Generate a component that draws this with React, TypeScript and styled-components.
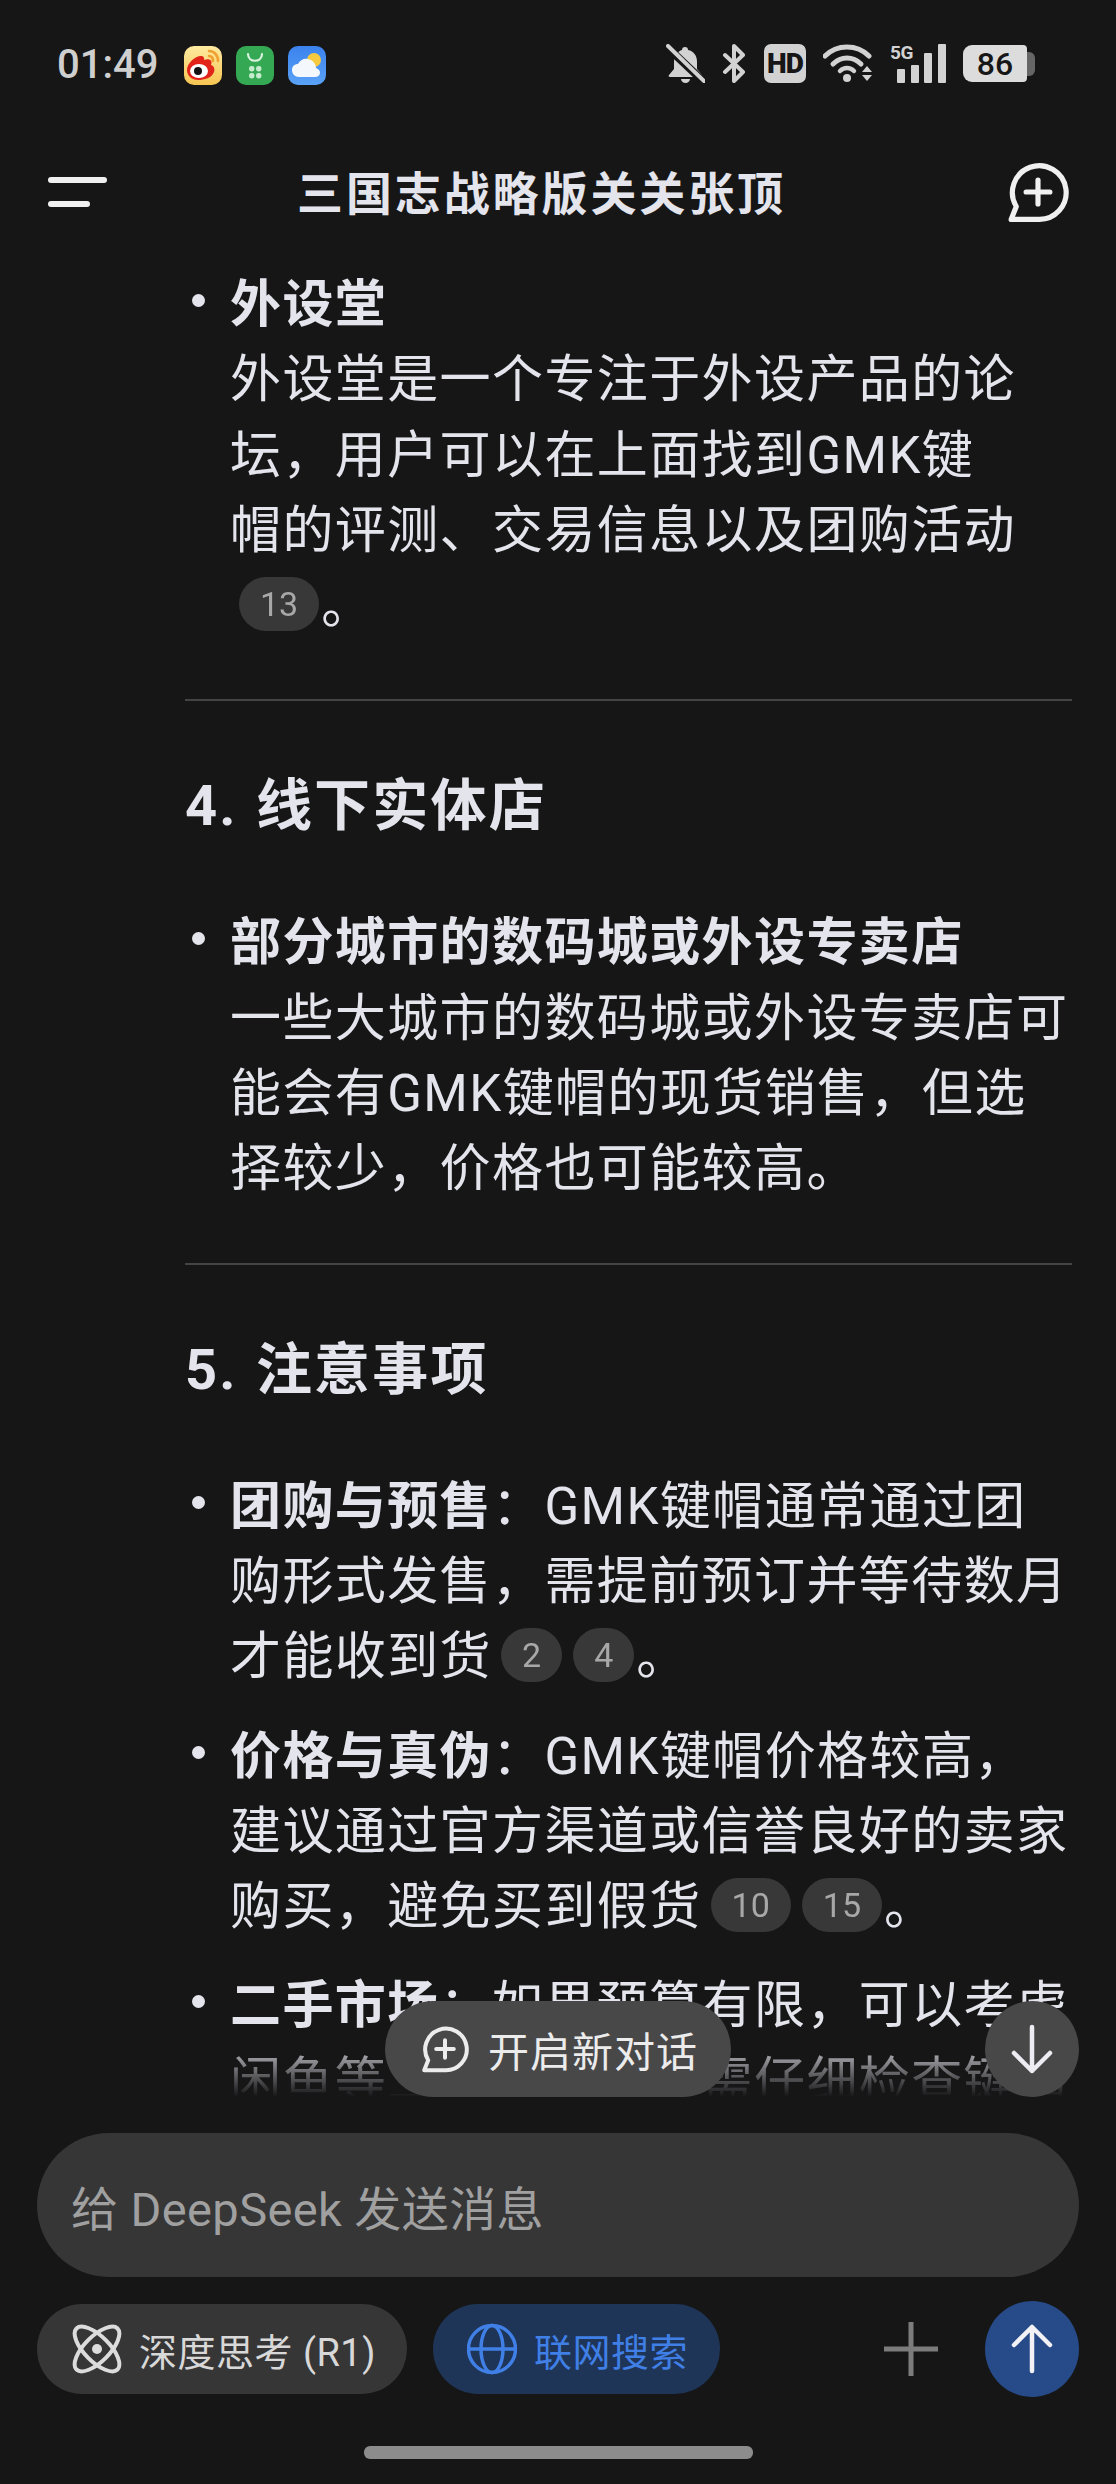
import React from 'react';
import styled, { createGlobalStyle } from 'styled-components';

const GlobalStyle = createGlobalStyle`
  html, body {
    margin: 0;
    padding: 0;
    background: #161617;
  }
  * {
    box-sizing: border-box;
  }
`;

const Phone = styled.div`
  width: 1116px;
  height: 2484px;
  display: flex;
  flex-direction: column;
  overflow: hidden;
  background: #161617;
  color: #e4e4ec;
  font-family: Roboto, "Noto Sans CJK SC", sans-serif;
`;

const StatusBar = styled.div`
  height: 130px;
  flex: none;
  display: flex;
  align-items: flex-start;
  padding: 44px 81px 0 57px;
`;

const Time = styled.div`
  font-size: 40px;
  line-height: 42px;
  font-weight: 500;
  color: #cfcfcf;
  margin-right: 26px;
`;

const AppIcons = styled.div`
  display: flex;
  gap: 14px;
  margin-top: 2px;
`;

const AppIcon = styled.svg`
  width: 38px;
  height: 39px;
  display: block;
`;

const StatusIcons = styled.div`
  margin-left: auto;
  display: flex;
  align-items: center;
  gap: 17px;
  height: 39px;
`;

const HdBadge = styled.div`
  width: 42px;
  height: 39px;
  border-radius: 7px;
  background: #d2d2d2;
  color: #161617;
  font-size: 28px;
  font-weight: 900;
  letter-spacing: -1px;
  display: flex;
  align-items: center;
  justify-content: center;
`;

const Signal = styled.div`
  position: relative;
  width: 56px;
  height: 39px;
`;

const SignalBars = styled.svg`
  display: block;
  width: 56px;
  height: 39px;
`;

const FiveG = styled.span`
  position: absolute;
  left: 0;
  top: -1px;
  font-size: 19px;
  line-height: 19px;
  font-weight: 700;
  color: #d2d2d2;
  letter-spacing: -0.5px;
`;

const Battery = styled.div`
  display: flex;
  align-items: center;
`;

const BatteryBody = styled.div`
  width: 64px;
  height: 37px;
  border-radius: 9px 4px 4px 9px;
  background: #dcdcdc;
  color: #161617;
  font-size: 32px;
  font-weight: 500;
  display: flex;
  align-items: center;
  justify-content: center;
`;

const BatteryNub = styled.div`
  width: 8px;
  height: 24px;
  border-radius: 0 6px 6px 0;
  background: #666;
`;

const Header = styled.div`
  height: 124px;
  flex: none;
  display: flex;
  align-items: center;
  padding: 0 47px 0 48px;
`;

const MenuButton = styled.div`
  width: 59px;
  display: flex;
  flex-direction: column;
  gap: 18px;
`;

const MenuLine = styled.div<{ $short?: boolean }>`
  height: 6px;
  border-radius: 3px;
  background: #f0f0f0;
  width: ${(p) => (p.$short ? '42px' : '59px')};
`;

const Title = styled.div`
  margin-left: 190px;
  font-size: 46px;
  line-height: 60px;
  font-weight: 700;
  letter-spacing: 2.9px;
  color: #e4e4ec;
  margin-top: 4px;
`;

const HeaderIcon = styled.svg`
  margin-left: auto;
  width: 62px;
  height: 62px;
  display: block;
`;

const ChatArea = styled.div`
  position: relative;
  flex: 1;
  min-height: 0;
  overflow: hidden;
`;

const Scroller = styled.div`
  height: 100%;
  overflow: hidden;
  padding: 13px 44px 0 185px;
  font-size: 51px;
  line-height: 75.3px;
  letter-spacing: 1.4px;
  mask-image: linear-gradient(to bottom, #000 calc(100% - 62px), transparent 100%);
`;

const Item = styled.div`
  display: flex;
  padding-left: 7px;
  margin-bottom: 24px;
`;

const Dot = styled.div`
  flex: none;
  width: 13px;
  height: 13px;
  border-radius: 50%;
  margin: 27px 25px 0 0;
  background: #e4e4ec;
`;

const ItemText = styled.div`
  min-width: 0;
  flex: 1;
`;

const Divider = styled.hr`
  border: none;
  height: 2px;
  margin: 56px 0 0;
  background: #444446;
`;

const SectionTitle = styled.h3`
  margin: 68px 0 61px;
  font-size: 56px;
  line-height: 75px;
  font-weight: 700;
  letter-spacing: 2.2px;
  word-spacing: 2px;
`;

const Cite = styled.span`
  display: inline-block;
  height: 54px;
  min-width: 60px;
  padding: 0 21px;
  margin: 0 2px 0 9px;
  border-radius: 27px;
  background: #383839;
  color: #a8a8a8;
  font-size: 34px;
  line-height: 54px;
  letter-spacing: 0;
  text-align: center;
  vertical-align: 7px;
`;

const NewChatPill = styled.div`
  position: absolute;
  left: 385px;
  bottom: 0;
  width: 346px;
  height: 96px;
  border-radius: 48px;
  background: #484849;
  display: flex;
  align-items: center;
  padding-left: 36px;
  gap: 19px;
  font-size: 41px;
  letter-spacing: 1px;
  color: #ececec;
`;

const PillIcon = styled.svg`
  width: 48px;
  height: 48px;
  display: block;
`;

const RoundButton = styled.div<{ $blue?: boolean }>`
  width: 94px;
  height: 96px;
  border-radius: 50%;
  display: flex;
  align-items: center;
  justify-content: center;
  background: ${(p) => (p.$blue ? '#274b88' : '#484849')};
`;

const ScrollDown = styled(RoundButton)`
  position: absolute;
  right: 37px;
  bottom: 0;
`;

const Arrow = styled.svg`
  width: 46px;
  height: 50px;
  display: block;
`;

const Composer = styled.div`
  flex: none;
  padding: 36px 37px 25px;
`;

const InputBox = styled.div`
  height: 144px;
  border-radius: 72px;
  background: #363637;
  padding: 0 34px;
  display: flex;
  align-items: center;
  font-size: 47px;
  letter-spacing: 0.4px;
  color: #a0a0a0;
`;

const ActionRow = styled.div`
  margin-top: 24px;
  display: flex;
  align-items: center;
  gap: 26px;
`;

const Chip = styled.div<{ $active?: boolean }>`
  height: 90px;
  border-radius: 45px;
  display: flex;
  align-items: center;
  gap: 17px;
  padding-left: ${(p) => (p.$active ? '34px' : '35px')};
  width: ${(p) => (p.$active ? '287px' : '370px')};
  background: ${(p) => (p.$active ? '#1f3557' : '#363637')};
  color: ${(p) => (p.$active ? '#3f7fe6' : '#d8d8d8')};
  font-size: 38px;
  letter-spacing: 0.5px;
`;

const ChipIcon = styled.svg`
  width: 50px;
  height: 52px;
  flex: none;
  display: block;
`;

const PlusIcon = styled.svg`
  margin-left: auto;
  margin-right: 21px;
  width: 54px;
  height: 54px;
  display: block;
`;

const HomeBar = styled.div`
  width: 389px;
  height: 13px;
  border-radius: 6px;
  background: #8c8c8c;
  margin: 49px auto 0;
`;

const StatusFill = '#d2d2d2';

const App: React.FC = () => {
  return (
    <Phone>
      <GlobalStyle />
      <StatusBar>
        <Time>01:49</Time>
        <AppIcons>
          <AppIcon viewBox="0 0 38 39">
            <defs>
              <linearGradient id="wb" x1="0" y1="0" x2="0" y2="1">
                <stop offset="0" stopColor="#fdeaa0" />
                <stop offset="1" stopColor="#f6c552" />
              </linearGradient>
            </defs>
            <rect width="38" height="39" rx="10" fill="url(#wb)" />
            <path d="M3 24c0-7 9-15 15-14 3 1 2 4 2 4 5-2 9 0 7 5 3 1 4 4 3 7-2 6-10 8-16 8-6 0-11-4-11-10z" fill="#e2231a" />
            <ellipse cx="15" cy="25" rx="9" ry="7" fill="#fff" />
            <circle cx="14" cy="25" r="4" fill="#111" />
            <path d="M25 5c5 0 9 4 9 10M25 10c3 0 4 2 4 5" fill="none" stroke="#f0a030" strokeWidth="2.6" strokeLinecap="round" />
          </AppIcon>
          <AppIcon viewBox="0 0 38 39">
            <rect width="38" height="39" rx="10" fill="#34a853" />
            <path d="M12 8c0 9 14 9 14 0" fill="none" stroke="#d9f3df" strokeWidth="2.2" strokeLinecap="round" />
            <rect x="13" y="20" width="5.5" height="5.5" rx="2.4" fill="#c6ecd0" />
            <rect x="20" y="20" width="5.5" height="5.5" rx="2.4" fill="#c6ecd0" />
            <rect x="13" y="27" width="5.5" height="5.5" rx="2.4" fill="#c6ecd0" />
            <rect x="20" y="27" width="5.5" height="5.5" rx="2.4" fill="#c6ecd0" />
          </AppIcon>
          <AppIcon viewBox="0 0 38 39">
            <defs>
              <linearGradient id="wx" x1="0" y1="0" x2="0" y2="1">
                <stop offset="0" stopColor="#3b82ee" />
                <stop offset="1" stopColor="#5aa2f6" />
              </linearGradient>
            </defs>
            <rect width="38" height="39" rx="10" fill="url(#wx)" />
            <circle cx="26" cy="14" r="7" fill="#f7c93e" />
            <path d="M11 31c-4 0-7-3-7-7s3-6 6-6c2-4 6-6 10-5 5 1 8 5 8 9 3 1 4 3 4 5s-2 4-5 4z" fill="#f4f8fd" />
          </AppIcon>
        </AppIcons>
        <StatusIcons>
          <svg width="39" height="39" viewBox="0 0 39 39">
            <path d="M19 3c2 0 3 1 3 3 6 1 9 6 9 12v7l5 6c1 1 0 2-1 2H4c-1 0-2-1-1-2l5-6v-7c0-6 4-11 8-12 0-2 1-3 3-3z" fill={StatusFill} />
            <path d="M15 35h9c0 2-2 4-4.500 4S15 37 15 35z" fill={StatusFill} />
            <path d="M0 2l38 36" stroke="#161617" strokeWidth="8" />
            <path d="M2 2l36 35" stroke={StatusFill} strokeWidth="4" strokeLinecap="round" />
          </svg>
          <svg width="25" height="39" viewBox="0 0 25 39">
            <path d="M3 11l18 17-9 9V2l9 9L3 28" fill="none" stroke={StatusFill} strokeWidth="4" strokeLinejoin="round" strokeLinecap="round" />
          </svg>
          <HdBadge>HD</HdBadge>
          <svg width="50" height="39" viewBox="0 0 50 39">
            <path d="M2 12C14 0 34 0 46 12" fill="none" stroke={StatusFill} strokeWidth="5" strokeLinecap="round" />
            <path d="M10 20c8-8 20-8 28 0" fill="none" stroke={StatusFill} strokeWidth="5" strokeLinecap="round" />
            <path d="M17 27c4-4 10-4 14 0" fill="none" stroke={StatusFill} strokeWidth="4.500" strokeLinecap="round" />
            <circle cx="24" cy="34" r="4" fill={StatusFill} />
            <path d="M39 28l5-6 5 6zM39 31h10l-5 6z" fill={StatusFill} />
          </svg>
          <Signal>
            <SignalBars viewBox="0 0 56 39">
              <rect x="7" y="25" width="8" height="14" rx="1" fill={StatusFill} />
              <rect x="21" y="21" width="8" height="18" rx="1" fill={StatusFill} />
              <rect x="34" y="9" width="8" height="30" rx="1" fill={StatusFill} />
              <rect x="48" y="0" width="8" height="39" rx="1" fill={StatusFill} />
            </SignalBars>
            <FiveG>5G</FiveG>
          </Signal>
          <Battery>
            <BatteryBody>86</BatteryBody>
            <BatteryNub />
          </Battery>
        </StatusIcons>
      </StatusBar>

      <Header>
        <MenuButton>
          <MenuLine />
          <MenuLine $short />
        </MenuButton>
        <Title>三国志战略版关关张顶</Title>
        <HeaderIcon viewBox="0 0 60 60">
          <path d="M4 56.500 9 44A26 26 0 1 1 30 56.500Z" fill="none" stroke="#f0f0f0" strokeWidth="5" strokeLinejoin="round" />
          <path d="M18.500 30h23M30 18.500v23" fill="none" stroke="#f0f0f0" strokeWidth="5" strokeLinecap="round" />
        </HeaderIcon>
      </Header>

      <ChatArea>
        <Scroller>
          <Item>
            <Dot />
            <ItemText>
              <strong>外设堂</strong>
              <br />
              外设堂是一个专注于外设产品的论坛，用户可以在上面找到GMK键
              <br />
              帽的评测、交易信息以及团购活动<Cite>13</Cite>。
            </ItemText>
          </Item>
          <Divider />
          <SectionTitle>4. 线下实体店</SectionTitle>
          <Item>
            <Dot />
            <ItemText>
              <strong>部分城市的数码城或外设专卖店</strong>
              <br />
              一些大城市的数码城或外设专卖店可能会有GMK键帽的现货销售，但选择较少，价格也可能较高。
            </ItemText>
          </Item>
          <Divider />
          <SectionTitle>5. 注意事项</SectionTitle>
          <Item>
            <Dot />
            <ItemText>
              <strong>团购与预售</strong>：GMK键帽通常通过团购形式发售，需提前预订并等待数月才能收到货<Cite>2</Cite><Cite>4</Cite>。
            </ItemText>
          </Item>
          <Item>
            <Dot />
            <ItemText>
              <strong>价格与真伪</strong>：GMK键帽价格较高，建议通过官方渠道或信誉良好的卖家购买，避免买到假货<Cite>10</Cite><Cite>15</Cite>。
            </ItemText>
          </Item>
          <Item>
            <Dot />
            <ItemText>
              <strong>二手市场</strong>：如果预算有限，可以考虑闲鱼等二手平台，但需仔细检查键帽的成色和真伪。
            </ItemText>
          </Item>
        </Scroller>
        <NewChatPill>
          <PillIcon viewBox="0 0 60 60">
            <path d="M4 56.500 9 44A26 26 0 1 1 30 56.500Z" fill="none" stroke="#ececec" strokeWidth="5" strokeLinejoin="round" />
            <path d="M19 30h22M30 19v22" fill="none" stroke="#ececec" strokeWidth="5" strokeLinecap="round" />
          </PillIcon>
          开启新对话
        </NewChatPill>
        <ScrollDown>
          <Arrow viewBox="0 0 46 50">
            <path d="M23 3v44M5 29l18 18 18-18" fill="none" stroke="#ececf2" strokeWidth="4.500" strokeLinecap="round" strokeLinejoin="round" />
          </Arrow>
        </ScrollDown>
      </ChatArea>

      <Composer>
        <InputBox>给 DeepSeek 发送消息</InputBox>
        <ActionRow>
          <Chip>
            <ChipIcon viewBox="0 0 50 52">
              <ellipse cx="25" cy="26" rx="29" ry="12.500" transform="rotate(45 25 26)" fill="none" stroke="#dcdcdc" strokeWidth="4" />
              <ellipse cx="25" cy="26" rx="29" ry="12.500" transform="rotate(-45 25 26)" fill="none" stroke="#dcdcdc" strokeWidth="4" />
              <circle cx="25" cy="26" r="5" fill="#dcdcdc" />
            </ChipIcon>
            深度思考 (R1)
          </Chip>
          <Chip $active>
            <ChipIcon viewBox="0 0 50 52">
              <circle cx="25" cy="26" r="23.500" fill="none" stroke="#3f7fe6" strokeWidth="3.500" />
              <ellipse cx="25" cy="26" rx="11" ry="23.500" fill="none" stroke="#3f7fe6" strokeWidth="3.500" />
              <path d="M2 26h46" stroke="#3f7fe6" strokeWidth="3.500" />
            </ChipIcon>
            联网搜索
          </Chip>
          <PlusIcon viewBox="0 0 54 54">
            <path d="M27 0v54M0 27h54" stroke="#7c7c7c" strokeWidth="5" strokeLinecap="round" />
          </PlusIcon>
          <RoundButton $blue>
            <Arrow viewBox="0 0 46 50">
              <path d="M23 47V3M5 21 23 3l18 18" fill="none" stroke="#f2f2f6" strokeWidth="4.500" strokeLinecap="round" strokeLinejoin="round" />
            </Arrow>
          </RoundButton>
        </ActionRow>
        <HomeBar />
      </Composer>
    </Phone>
  );
};

export default App;
